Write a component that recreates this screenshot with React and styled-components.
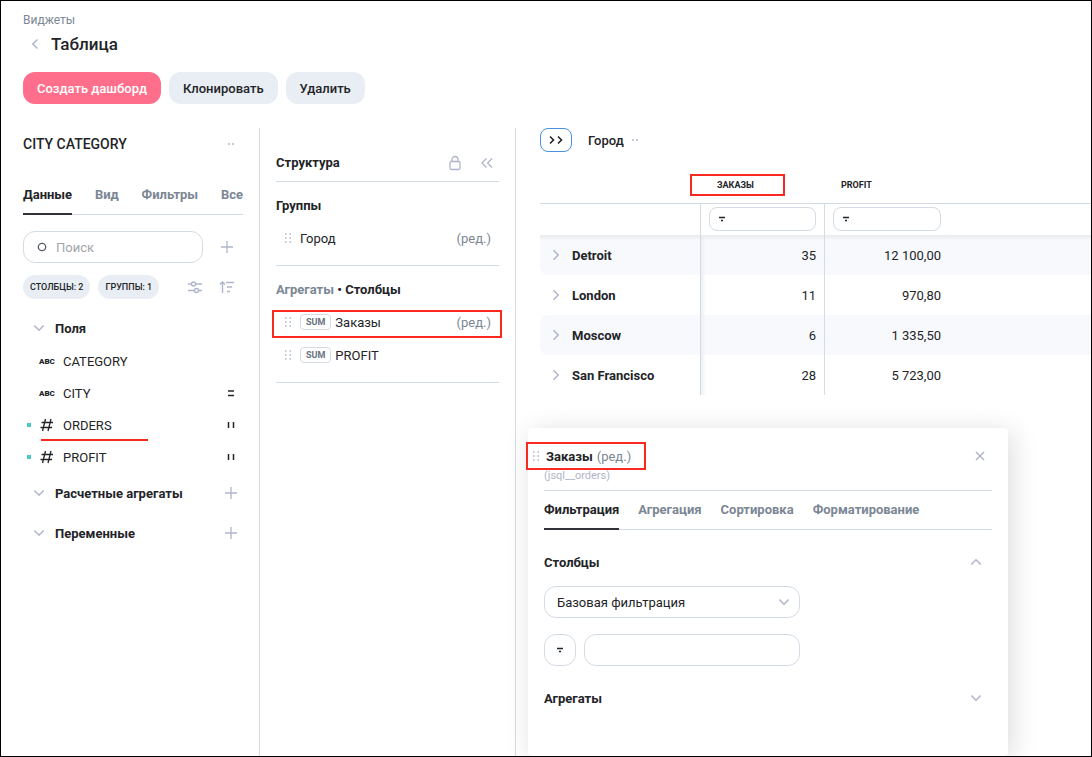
import React, { useState } from 'react';
import styled, { createGlobalStyle, ThemeProvider } from 'styled-components';

const theme = {
  colors: {
    text: '#232428',
    muted: '#7b8794',
    faint: '#b0b5c9',
    line: '#d3dce4',
    chip: '#e9edf4',
    stripe: '#f7f9fd',
    primary: '#ff6f8b',
    accent: '#4a90e2',
    mark: '#f9291f',
    active: '#4bc9c8',
  },
};

const GlobalStyle = createGlobalStyle`
  * {
    box-sizing: border-box;
  }

  body {
    margin: 0;
    background: #fff;
    color: ${theme.colors.text};
    font: 400 13px/21px Roboto, 'Liberation Sans', sans-serif;
  }

  button, input, select {
    font: inherit;
    color: inherit;
  }

  h1, h2, h3, ul {
    margin: 0;
    padding: 0;
  }
`;

// === Icons ===

const Svg = styled.svg`
  display: block;
  flex: none;
  fill: none;
  stroke: currentColor;
  stroke-width: ${props => props.$stroke || 1.3};
`;

const Icon = ({ w = 16, h = 16, stroke, children }) => (
  <Svg width={w} height={h} viewBox={`0 0 ${w} ${h}`} $stroke={stroke} aria-hidden="true">
    {children}
  </Svg>
);

const chevrons = {
  down: 'M3.3 5.5L8 10.2l4.7-4.7',
  up: 'M3.3 10.5L8 5.8l4.7 4.7',
  right: 'M5.5 3.3L10.2 8l-4.7 4.7',
  left: 'M10.5 3.5L5.8 8l4.7 4.5',
};

const Chevron = ({ dir }) => <Icon stroke={1.5}><path d={chevrons[dir]} /></Icon>;

const Plus = () => <Icon><path d="M8 2v12M2 8h12" /></Icon>;

const Close = () => <Icon stroke={1.5}><path d="M4 4l8 8M12 4l-8 8" /></Icon>;

const Dots = () => (
  <Icon>
    <path d="M5 8h2M9 8h2" strokeWidth="2" opacity="0.7" />
  </Icon>
);

const Grip = () => (
  <Icon w={8} h={12} stroke={1.5}>
    <path d="M1 2h1.5M5.5 2H7M1 6h1.5M5.5 6H7M1 10h1.5M5.5 10H7" />
  </Icon>
);

const FilterIcon = () => (
  <Icon w={8} h={8} stroke={1.5}>
    <path d="M1 2.5h6M3 5.5h2" />
  </Icon>
);

const Lock = () => (
  <Icon>
    <rect x="3" y="6.5" width="10" height="8" rx="1.5" />
    <path d="M5 6.500V4.5a3 3 0 0 1 6 0v2" />
  </Icon>
);

const Collapse = () => (
  <Icon><path d="M7.5 3.5L3 8l4.500 4.5M13 3.5L8.5 8l4.500 4.5" /></Icon>
);

const Expand = () => (
  <Icon stroke={1.6}><path d="M2 4.5L5.5 8 2 11.5M10 4.5L13.5 8 10 11.5" /></Icon>
);

const Sliders = () => (
  <Icon stroke={1.4}>
    <path d="M1 5h3.500M8.500 5H15M1 11.5h6.500M11.500 11.5H15" />
    <circle cx="6.5" cy="5" r="2" />
    <circle cx="9.5" cy="11.5" r="2" />
  </Icon>
);

const SortIcon = () => (
  <Icon stroke={1.4}>
    <path d="M3.5 14V3M1 5.5L3.500 3 6 5.5M7 3.500h8M8 8h5M8 12.500h3" />
  </Icon>
);

const SearchIcon = () => <Icon><circle cx="8" cy="8" r="3.7" /></Icon>;

const HashIcon = () => (
  <Icon><path d="M6.5 2L3.500 14M12 2L9 14M2.500 5.5H14M1.500 10.5H13" /></Icon>
);

const Equals = () => <Icon stroke={1.5}><path d="M5 6h6M5 10.500h6" /></Icon>;

const Bars = () => <Icon stroke={1.5}><path d="M5.500 5v6M10.500 5v6" /></Icon>;

// === Page ===

const Page = styled.div`
  display: flex;
  flex-direction: column;
  min-height: 100vh;
  border: 1px solid #000;
  overflow: hidden;
`;

const PageHeader = styled.header`
  padding: 11px 22px 24px;
`;

const Crumb = styled.a`
  display: block;
  color: ${props => props.theme.colors.muted};
  font-size: 12px;
  line-height: 16px;
  text-decoration: none;
`;

const TitleRow = styled.div`
  display: flex;
  align-items: center;
  gap: 4px;
  height: 32px;
`;

const Title = styled.h1`
  font-size: 17px;
  font-weight: 500;
`;

const Actions = styled.div`
  display: flex;
  gap: 8px;
  margin-top: 12px;
`;

const Button = styled.button`
  height: 32px;
  padding: 0 14px;
  border: 0;
  border-radius: 12px;
  font-weight: 500;
  color: ${props => (props.$primary ? '#fff' : props.theme.colors.text)};
  background: ${props => (props.$primary ? props.theme.colors.primary : props.theme.colors.chip)};
`;

const IconButton = styled.button`
  display: flex;
  align-items: center;
  justify-content: center;
  flex: none;
  width: 24px;
  height: 24px;
  padding: 0;
  border: 0;
  background: none;
  color: ${props => props.theme.colors.faint};
`;

const IconGlyph = styled.span`
  color: ${props => props.theme.colors.faint};
`;

const Columns = styled.div`
  display: grid;
  grid-template-columns: 259px 256px 1fr;
  flex: 1;
`;

// Red frame drawn over the element it points at
const Mark = styled.span`
  position: absolute;
  inset: ${props => props.$inset};
  border: 2px solid ${props => props.theme.colors.mark};
  pointer-events: none;
`;

// === Tabs ===

const TabList = styled.div`
  display: flex;
  justify-content: ${props => (props.$spread ? 'space-between' : 'flex-start')};
  gap: 19px;
  border-bottom: 1px solid ${props => props.theme.colors.line};
`;

const Tab = styled.button`
  height: 39px;
  margin-bottom: -1px;
  padding: 0;
  border: 0;
  border-bottom: 2px solid ${props => (props.$active ? '#333238' : 'transparent')};
  background: none;
  font-weight: 700;
  color: ${props => (props.$active ? props.theme.colors.text : props.theme.colors.muted)};
`;

const Tabs = ({ items, spread }) => {
  const [active, setActive] = useState(items[0]);

  return (
    <TabList role="tablist" $spread={spread}>
      {items.map(item => (
        <Tab
          key={item}
          type="button"
          role="tab"
          aria-selected={item === active}
          $active={item === active}
          onClick={() => setActive(item)}
        >
          {item}
        </Tab>
      ))}
    </TabList>
  );
};

// === Data sidebar ===

const Sidebar = styled.aside`
  padding: 0 16px 16px 22px;
  border-right: 1px solid ${props => props.theme.colors.line};
`;

const SidebarHead = styled.div`
  display: flex;
  align-items: center;
  justify-content: space-between;
  height: 32px;
  margin-bottom: 16px;
`;

const Heading = styled.h2`
  font-size: 13px;
  font-weight: 700;
`;

const SourceName = styled(Heading)`
  font-size: 14px;
  font-weight: 500;
`;

const SearchRow = styled.div`
  display: flex;
  align-items: center;
  justify-content: space-between;
  gap: 12px;
  margin-top: 16px;
  padding-right: 4px;
`;

const SearchBox = styled.label`
  display: flex;
  align-items: center;
  gap: 6px;
  width: 180px;
  height: 32px;
  padding: 0 10px;
  border: 1px solid ${props => props.theme.colors.line};
  border-radius: 12px;
  color: #555b66;
`;

const BareInput = styled.input`
  flex: 1;
  min-width: 0;
  padding: 0;
  border: 0;
  outline: 0;
  background: none;

  &::placeholder {
    color: #a3a6ab;
    opacity: 1;
  }
`;

const ChipRow = styled.div`
  display: flex;
  align-items: center;
  gap: 8px;
  margin: 12px 0;
  padding-right: 4px;
`;

const Chip = styled.span`
  padding: 0 7px;
  border-radius: 12px;
  background: ${props => props.theme.colors.chip};
  font-size: 9px;
  font-weight: 500;
  line-height: 24px;
  white-space: nowrap;
`;

const ChipTools = styled.div`
  display: flex;
  gap: 8px;
  margin-left: auto;
`;

const SectionHead = styled.div`
  display: flex;
  align-items: center;
  gap: 8px;
  height: ${props => (props.$open ? '34px' : '40px')};
  padding-left: 8px;
`;

const SectionTitle = styled(Heading)`
  flex: 1;
`;

const FieldList = styled.ul`
  list-style: none;
`;

const Field = styled.li`
  position: relative;
  display: flex;
  align-items: center;
  gap: 8px;
  height: 32px;
  padding: 0 4px;

  &::before {
    content: '';
    width: 4px;
    height: 4px;
    background: ${props => (props.$active ? props.theme.colors.active : 'transparent')};
  }
`;

const FieldName = styled.span`
  flex: 1;
`;

const TypeText = styled.span`
  width: 16px;
  font-size: 8px;
  font-weight: 900;
`;

const Underline = styled.span`
  position: absolute;
  left: 18px;
  bottom: 0;
  width: 107px;
  height: 2px;
  background: ${props => props.theme.colors.mark};
`;

const fields = [
  { name: 'CATEGORY' },
  { name: 'CITY', role: <Equals /> },
  { name: 'ORDERS', numeric: true, role: <Bars />, marked: true },
  { name: 'PROFIT', numeric: true, role: <Bars /> },
];

const DataSidebar = () => (
  <Sidebar>
    <SidebarHead>
      <SourceName>CITY CATEGORY</SourceName>
      <IconButton type="button" aria-label="Меню"><Dots /></IconButton>
    </SidebarHead>
    <Tabs spread items={['Данные', 'Вид', 'Фильтры', 'Все']} />
    <SearchRow>
      <SearchBox>
        <SearchIcon />
        <BareInput type="text" placeholder="Поиск" aria-label="Поиск" />
      </SearchBox>
      <IconButton type="button" aria-label="Добавить"><Plus /></IconButton>
    </SearchRow>
    <ChipRow>
      <Chip>СТОЛБЦЫ: 2</Chip>
      <Chip>ГРУППЫ: 1</Chip>
      <ChipTools>
        <IconButton type="button" aria-label="Настройки"><Sliders /></IconButton>
        <IconButton type="button" aria-label="Порядок"><SortIcon /></IconButton>
      </ChipTools>
    </ChipRow>
    <SectionHead $open>
      <IconGlyph><Chevron dir="down" /></IconGlyph>
      <SectionTitle>Поля</SectionTitle>
    </SectionHead>
    <FieldList>
      {fields.map(field => (
        <Field key={field.name} $active={field.numeric}>
          {field.numeric ? <HashIcon /> : <TypeText>ABC</TypeText>}
          <FieldName>{field.name}</FieldName>
          {field.role}
          {field.marked && <Underline />}
        </Field>
      ))}
    </FieldList>
    {['Расчетные агрегаты', 'Переменные'].map(title => (
      <SectionHead key={title}>
        <IconGlyph><Chevron dir="down" /></IconGlyph>
        <SectionTitle>{title}</SectionTitle>
        <IconButton type="button" aria-label="Добавить"><Plus /></IconButton>
      </SectionHead>
    ))}
  </Sidebar>
);

// === Structure ===

const Structure = styled.section`
  padding: 16px 16px 0;
  border-right: 1px solid ${props => props.theme.colors.line};
`;

const StructureHead = styled.div`
  display: flex;
  align-items: center;
  gap: 8px;
  height: 38px;
  border-bottom: 1px solid ${props => props.theme.colors.line};
`;

const Group = styled.div`
  padding: 12px 0 11px;
  border-bottom: 1px solid ${props => props.theme.colors.line};
`;

const GroupTitle = styled.h3`
  margin-bottom: 4px;
  font-size: 13px;
  font-weight: 700;
  line-height: 24px;
`;

const Muted = styled.span`
  color: ${props => props.theme.colors.muted};
`;

const GroupItems = styled.ul`
  display: grid;
  gap: 1px;
  list-style: none;
`;

const GroupItem = styled.li`
  position: relative;
  display: flex;
  align-items: center;
  gap: 4px;
  height: 32px;
  padding: 0 8px;
`;

const GripGlyph = styled.span`
  margin-right: 4px;
  color: ${props => props.theme.colors.faint};
`;

const SumBadge = styled.span`
  padding: 0 5px;
  border: 1px solid ${props => props.theme.colors.line};
  border-radius: 4px;
  color: #66717e;
  font-size: 9px;
  font-weight: 700;
  line-height: 14px;
`;

const Edited = styled(Muted)`
  margin-left: ${props => (props.$end ? 'auto' : '2px')};
`;

const StructurePanel = () => (
  <Structure>
    <StructureHead>
      <SectionTitle>Структура</SectionTitle>
      <IconButton type="button" aria-label="Закрепить"><Lock /></IconButton>
      <IconButton type="button" aria-label="Свернуть"><Collapse /></IconButton>
    </StructureHead>
    <Group>
      <GroupTitle>Группы</GroupTitle>
      <GroupItems>
        <GroupItem>
          <GripGlyph><Grip /></GripGlyph>
          Город
          <Edited $end>(ред.)</Edited>
        </GroupItem>
      </GroupItems>
    </Group>
    <Group>
      <GroupTitle><Muted>Агрегаты</Muted> • Столбцы</GroupTitle>
      <GroupItems>
        <GroupItem>
          <GripGlyph><Grip /></GripGlyph>
          <SumBadge>SUM</SumBadge>
          Заказы
          <Edited $end>(ред.)</Edited>
          <Mark $inset="4px -3px 0 -4px" />
        </GroupItem>
        <GroupItem>
          <GripGlyph><Grip /></GripGlyph>
          <SumBadge>SUM</SumBadge>
          PROFIT
        </GroupItem>
      </GroupItems>
    </Group>
  </Structure>
);

// === Table ===

const Workspace = styled.main`
  position: relative;
  padding-left: 24px;
`;

const Toolbar = styled.div`
  display: flex;
  align-items: center;
  height: 24px;
  gap: 16px;
`;

const ExpandButton = styled(IconButton)`
  width: 32px;
  border: 1px solid ${props => props.theme.colors.accent};
  border-radius: 8px;
  color: ${props => props.theme.colors.text};
`;

const GroupLabel = styled.span`
  display: flex;
  align-items: center;
  gap: 3px;
  font-weight: 500;
`;

const Table = styled.table`
  width: 100%;
  margin-top: 16px;
  table-layout: fixed;
  border-collapse: separate;
  border-spacing: 0;
`;

const Col = styled.col`
  width: ${props => props.$width};
`;

const HeadCell = styled.th`
  height: 36px;
  padding: 0 16px;
  border-bottom: 1px solid ${props => props.theme.colors.line};
  font-size: 9px;
  font-weight: 700;
  text-align: left;
`;

const HeadLabel = styled.span`
  position: relative;
`;

const Cell = styled.td`
  padding: 0 8px;
  border-right: ${props => (props.$line ? `1px solid ${props.theme.colors.line}` : '0')};
  text-align: right;
`;

const FilterRow = styled.tr`
  height: 31px;

  td {
    padding-bottom: 1px;
  }
`;

const FilterBox = styled.label`
  display: flex;
  align-items: center;
  gap: 8px;
  height: 24px;
  padding: 0 8px;
  border: 1px solid ${props => props.theme.colors.line};
  border-radius: 8px;
`;

const RowHead = styled.th`
  padding: 0 8px;
  border-right: 1px solid ${props => props.theme.colors.line};
  border-radius: 8px 0 0 8px;
  font-weight: 700;
  text-align: left;
`;

const DataRow = styled.tr`
  height: 40px;

  &:nth-child(odd) > * {
    background-color: ${props => props.theme.colors.stripe};
  }

  &:first-child > * {
    box-shadow: inset 0 5px 3px -2px #ececee;
  }

  &:first-child ${RowHead} {
    border-top-left-radius: 0;
  }

  td:nth-child(2) {
    background-image: linear-gradient(to right, #eeeff2, transparent 5px);
  }
`;

const RowLabel = styled.span`
  display: flex;
  align-items: center;
  gap: 8px;
`;

const rows = [
  ['Detroit', '35', '12 100,00'],
  ['London', '11', '970,80'],
  ['Moscow', '6', '1 335,50'],
  ['San Francisco', '28', '5 723,00'],
];

const ResultTable = () => (
  <Table>
    <colgroup>
      <Col $width="161px" />
      <Col $width="124px" />
      <Col $width="124px" />
      <Col />
    </colgroup>
    <thead>
      <tr>
        <HeadCell />
        <HeadCell scope="col">
          <HeadLabel>
            ЗАКАЗЫ
            <Mark $inset="-6px -31px -6px -27px" />
          </HeadLabel>
        </HeadCell>
        <HeadCell scope="col">PROFIT</HeadCell>
        <HeadCell />
      </tr>
      <FilterRow>
        <Cell $line />
        {['Заказы', 'PROFIT'].map((name, index) => (
          <Cell key={name} $line={index === 0}>
            <FilterBox>
              <FilterIcon />
              <BareInput type="text" aria-label={`Фильтр ${name}`} />
            </FilterBox>
          </Cell>
        ))}
        <Cell />
      </FilterRow>
    </thead>
    <tbody>
      {rows.map(([city, orders, profit]) => (
        <DataRow key={city}>
          <RowHead scope="row">
            <RowLabel>
              <IconGlyph><Chevron dir="right" /></IconGlyph>
              {city}
            </RowLabel>
          </RowHead>
          <Cell $line>{orders}</Cell>
          <Cell>{profit}</Cell>
          <Cell />
        </DataRow>
      ))}
    </tbody>
  </Table>
);

// === Column settings ===

// Floating window above the table area
const Panel = styled.section`
  position: absolute;
  top: 300px;
  bottom: 0;
  left: 12px;
  width: 480px;
  padding: 16px 16px 0;
  border-radius: 4px;
  background: #fff;
  box-shadow: 4px 4px 28px rgba(0, 0, 0, 0.14);
`;

const PanelHead = styled.div`
  display: flex;
  align-items: center;
  justify-content: space-between;
  height: 24px;
`;

const PanelTitle = styled.div`
  position: relative;
  display: flex;
  align-items: center;
  gap: 2px;
  margin-left: -12px;
`;

const PanelNote = styled.div`
  padding-bottom: 6px;
  border-bottom: 1px solid ${props => props.theme.colors.line};
  color: ${props => props.theme.colors.faint};
  font-size: 11px;
  line-height: 16px;
`;

const PanelSection = styled.div`
  display: flex;
  align-items: center;
  justify-content: space-between;
  height: 32px;
  margin-top: 16px;
  padding-right: 4px;
`;

const PanelBody = styled.div`
  display: grid;
  gap: 16px;
  width: 256px;
  margin-top: 8px;
`;

const SelectBox = styled.div`
  display: grid;
  align-items: center;
  color: ${props => props.theme.colors.faint};

  > * {
    grid-area: 1 / 1;
  }

  > svg {
    justify-self: end;
    margin-right: 8px;
    pointer-events: none;
  }
`;

const Select = styled.select`
  width: 100%;
  height: 32px;
  padding: 0 32px 0 12px;
  border: 1px solid ${props => props.theme.colors.line};
  border-radius: 12px;
  appearance: none;
  background: #fff;
  color: ${props => props.theme.colors.text};
`;

const FilterLine = styled.div`
  display: flex;
  gap: 8px;
`;

const SquareButton = styled(IconButton)`
  width: 32px;
  height: 32px;
  border: 1px solid ${props => props.theme.colors.line};
  border-radius: 12px;
  color: ${props => props.theme.colors.text};
`;

const TextInput = styled.input`
  flex: 1;
  min-width: 0;
  height: 32px;
  padding: 0 12px;
  border: 1px solid ${props => props.theme.colors.line};
  border-radius: 12px;
`;

const ColumnSettings = () => (
  <Panel>
    <PanelHead>
      <PanelTitle>
        <GripGlyph><Grip /></GripGlyph>
        <Heading>Заказы</Heading>
        <Edited>(ред.)</Edited>
        <Mark $inset="-4px -15px -3px -6px" />
      </PanelTitle>
      <IconButton type="button" aria-label="Закрыть"><Close /></IconButton>
    </PanelHead>
    <PanelNote>(jsql__orders)</PanelNote>
    <Tabs items={['Фильтрация', 'Агрегация', 'Сортировка', 'Форматирование']} />
    <PanelSection>
      <Heading>Столбцы</Heading>
      <IconButton type="button" aria-label="Свернуть столбцы"><Chevron dir="up" /></IconButton>
    </PanelSection>
    <PanelBody>
      <SelectBox>
        <Select aria-label="Тип фильтрации">
          <option>Базовая фильтрация</option>
        </Select>
        <Chevron dir="down" />
      </SelectBox>
      <FilterLine>
        <SquareButton type="button" aria-label="Условие"><FilterIcon /></SquareButton>
        <TextInput type="text" aria-label="Значение" />
      </FilterLine>
    </PanelBody>
    <PanelSection>
      <Heading>Агрегаты</Heading>
      <IconButton type="button" aria-label="Развернуть агрегаты"><Chevron dir="down" /></IconButton>
    </PanelSection>
  </Panel>
);

const App = () => (
  <ThemeProvider theme={theme}>
    <GlobalStyle />
    <Page>
      <PageHeader>
        <Crumb href="#">Виджеты</Crumb>
        <TitleRow>
          <IconButton type="button" aria-label="Назад"><Chevron dir="left" /></IconButton>
          <Title>Таблица</Title>
        </TitleRow>
        <Actions>
          <Button type="button" $primary>Создать дашборд</Button>
          <Button type="button">Клонировать</Button>
          <Button type="button">Удалить</Button>
        </Actions>
      </PageHeader>
      <Columns>
        <DataSidebar />
        <StructurePanel />
        <Workspace>
          <Toolbar>
            <ExpandButton type="button" aria-label="Развернуть"><Expand /></ExpandButton>
            <GroupLabel>Город <IconGlyph><Dots /></IconGlyph></GroupLabel>
          </Toolbar>
          <ResultTable />
          <ColumnSettings />
        </Workspace>
      </Columns>
    </Page>
  </ThemeProvider>
);

export default App;
